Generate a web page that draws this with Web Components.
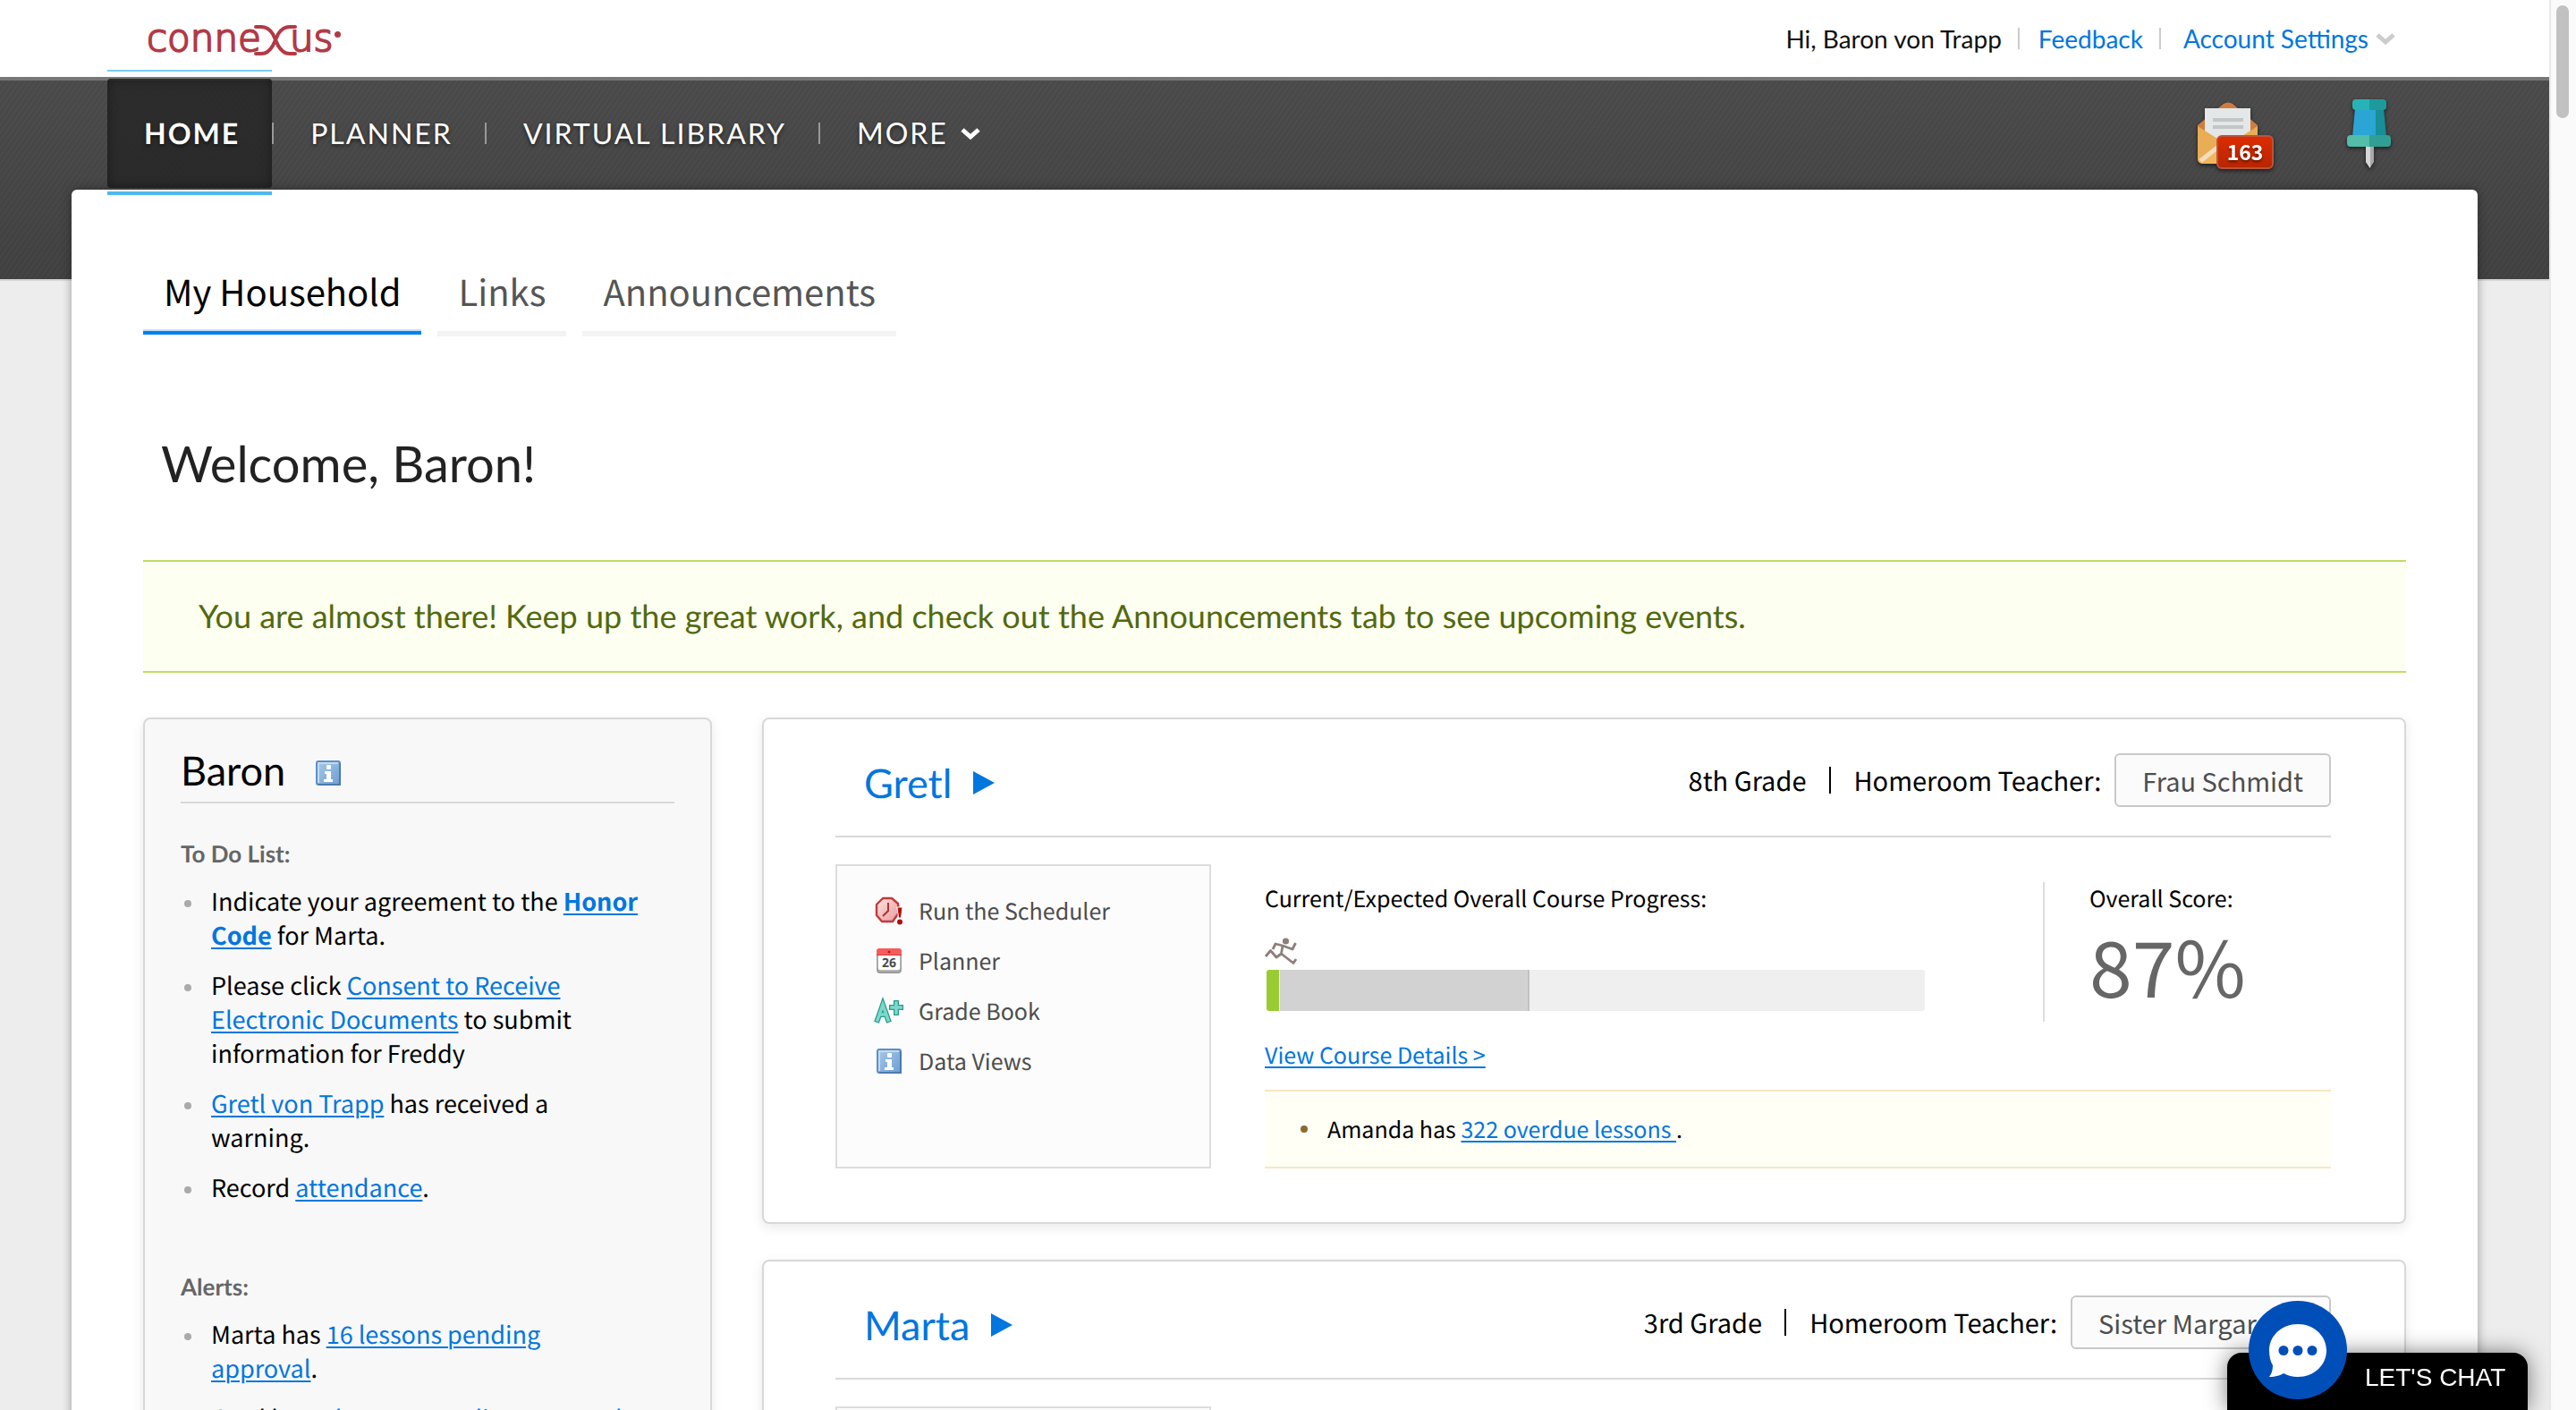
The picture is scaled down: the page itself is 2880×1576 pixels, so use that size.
<!DOCTYPE html>
<html lang="en">
<head>
<meta charset="utf-8">
<title>Connexus – Home</title>
<style>
  html, body { margin: 0; height: 100%; overflow: hidden; }
  body {
    --head: Lato, "Open Sans", sans-serif;
    --body: "Noto Sans CJK SC", "Open Sans", sans-serif;
    --link: #0076df;
    font: 27px/38px var(--body);
    text-rendering: geometricPrecision;
    color: #000;
    background: #ededed;
  }
  a { color: var(--link); text-decoration-thickness: 2px; text-underline-offset: 3px; }
</style>
</head>
<body>
<cx-app>
  <cx-topbar slot="top" user="Baron von Trapp"></cx-topbar>
  <cx-nav slot="nav" count="163"></cx-nav>
  <cx-page>
    <cx-tabs></cx-tabs>
    <cx-welcome>Welcome, Baron!</cx-welcome>
    <cx-banner>You are almost there! Keep up the great work, and check out the Announcements tab to see upcoming events.</cx-banner>
    <cx-columns>
      <cx-panel slot="side" name="Baron">
        <cx-list label="To Do List:">
          <cx-item>Indicate your agreement to the <a href="#honor"><b>Honor Code</b></a> for Marta.</cx-item>
          <cx-item>Please click <a href="#consent">Consent to Receive Electronic Documents</a> to submit information for Freddy</cx-item>
          <cx-item><a href="#gretl">Gretl von Trapp</a> has received a warning.</cx-item>
          <cx-item>Record <a href="#attendance">attendance</a>.</cx-item>
        </cx-list>
        <cx-list label="Alerts:">
          <cx-item>Marta has <a href="#marta-pending">16 lessons pending approval</a>.</cx-item>
          <cx-item>Gretl has <a href="#gretl-pending">3 lessons pending approval</a>.</cx-item>
        </cx-list>
      </cx-panel>
      <cx-student name="Gretl" grade="8th Grade" teacher="Frau Schmidt" score="87%">Amanda has <a href="#overdue">322 overdue lessons </a>.</cx-student>
      <cx-student name="Marta" grade="3rd Grade" teacher="Sister Margaretta" score="91%">Marta has <a href="#overdue">12 overdue lessons </a>.</cx-student>
    </cx-columns>
  </cx-page>
  <cx-chat slot="chat"></cx-chat>
</cx-app>

<script>
const define = (tag, render) => customElements.define(tag, class extends HTMLElement {
  constructor() {
    super();
    this.attachShadow({ mode: 'open' }).innerHTML =
      '<style>:host{display:block;box-sizing:border-box}*{box-sizing:border-box}</style>' +
      render(n => this.getAttribute(n) || '');
  }
});

const ICONS = {
  info: [28, 28, `
    <defs><linearGradient id="g" x1="0" y1="0" x2="1" y2="1"><stop offset="0" stop-color="#a9c8e8"/><stop offset="1" stop-color="#6d9fd4"/></linearGradient></defs>
    <rect x="1" y="1" width="26" height="26" rx="2" fill="url(#g)" stroke="#5c8fc6" stroke-width="2"/>
    <path d="M3 25V3H25" fill="none" stroke="#c3daf0" stroke-width="2"/>
    <path d="M3 27H27V3" fill="none" stroke="#4a7ab0" stroke-width="2"/>
    <rect x="12" y="5" width="5" height="5" rx="1" fill="#fff"/>
    <path d="M10 12h7v9h2v3H9v-3h3v-6h-2z" fill="#fff"/>`],
  clock: [32, 32, `
    <defs><linearGradient id="g" x1="0" y1="0" x2="1" y2="1"><stop offset="0" stop-color="#fbe4e4"/><stop offset="1" stop-color="#e89a9a"/></linearGradient></defs>
    <path d="M9 2h10l7 6 1 10-7 10H8L2 21V9z" fill="url(#g)" stroke="#c33a3a" stroke-width="2.4" stroke-linejoin="round"/>
    <path d="M15 7v9l-6 6" fill="none" stroke="#b83030" stroke-width="2"/>
    <path d="M25 12h6l-1.500 12h-3z" fill="#b50d0d" stroke="#fff" stroke-width="1"/>
    <circle cx="28" cy="28.500" r="3" fill="#b50d0d"/>`],
  calendar: [28, 28, `
    <rect x="1" y="3" width="26" height="24" rx="3" fill="#e8e8e8" stroke="#9a9a9a" stroke-width="2"/>
    <rect x="1" y="1" width="26" height="24" rx="3" fill="#fff" stroke="#a0a0a0" stroke-width="1.500"/>
    <path d="M0 8V3a3 3 0 0 1 3-3h22a3 3 0 0 1 3 3v5z" fill="#f75c5c"/><path d="M0 7.500h28" stroke="#d93a3a"/>
    <circle cx="14" cy="4" r="1.500" fill="#a22"/>
    <text x="14" y="21" text-anchor="middle" font-family="Open Sans, sans-serif" font-weight="700" font-size="14" fill="#4a4a4a">26</text>`],
  grade: [32, 26, `
    <g fill="none" stroke-linecap="square"><g stroke="#2a9a8c" stroke-width="6"><path d="M3 23L9 6L15 23M6 17h6"/><path d="M24 4v11M19 9h10"/></g>
    <g stroke="#7dd9cc" stroke-width="3.500"><path d="M3 23L9 6L15 23M6 17h6"/><path d="M24 4v11M19 9h10"/></g></g>`],
  runner: [36, 30, `
    <circle cx="23.500" cy="4" r="3.600" fill="#8e7f7b"/>
    <path d="M9 13L12 7L20 9L31 13L34.500 6M20 9L18.500 18L13 22L6.500 14.500L1 21M18.500 18L32 28.500L35 24" fill="none" stroke="#8e7f7b" stroke-width="2.800" stroke-linejoin="round"/>`],
  play: [24, 26, `<path d="M0 0L24 13L0 26z" fill="currentColor"/>`],
  chevron: [22, 14, `<path d="M2 3L11 11L20 3" fill="none" stroke="currentColor" stroke-width="5"/>`],
  mail: [70, 72, `
    <path d="M1 26L30 2Q35-1 40 2L68 26V40H1z" fill="#cf7d3f"/>
    <path d="M9 7H60V54H9z" fill="#e3e7e8"/>
    <path d="M18 18H52v4H18zM18 26H52v4H18z" fill="#c2c6c6"/>
    <path d="M1 27L31 46H38L68 27V64a5 5 0 0 1-5 5H6a5 5 0 0 1-5-5z" fill="#e9ad55"/>
    <path d="M5 67L29 47Q35 44 40 47L64 67Q62 69 60 69H9z" fill="#f3b55c"/>
    <path d="M4 66L28 47" stroke="#f5dcc0" stroke-width="5"/>`],
  pin: [50, 78, `
    <path d="M21 50H30V70L25.500 77L21 70z" fill="#a9a9a9"/><path d="M21 50H26V77L21 70z" fill="#d6d6d6"/>
    <path d="M9 10H32V42H6z" fill="#2ba5d4"/><path d="M32 10H41L44 42H32z" fill="#178e98"/>
    <path d="M6 4a4 4 0 0 1 4-4H25V12H10a4 4 0 0 1-4-4z" fill="#27b3b5"/><path d="M25 0H40a4 4 0 0 1 4 4V8a4 4 0 0 1-4 4H25z" fill="#1c9a9c"/>
    <path d="M0 44a4 4 0 0 1 4-4H25V53H4a4 4 0 0 1-4-4z" fill="#52bda8"/><path d="M25 40H45a4 4 0 0 1 4 4v5a4 4 0 0 1-4 4H25z" fill="#2f9f95"/>`],
  bubble: [110, 110, `
    <circle cx="55" cy="55" r="55" fill="#004fb8"/>
    <path d="M55 26c18 0 32 13 32 29.500S73 85 55 85c-6 0-11-1.500-16-4-3 2-9 4-16 4 3-4 4-8 4-13-2.500-4-4-10-4-16.500C23 39 37 26 55 26z" fill="#fff"/>
    <g fill="#004fb8"><circle cx="39" cy="55.500" r="5.500"/><circle cx="55" cy="55.500" r="5.500"/><circle cx="71" cy="55.500" r="5.500"/></g>`]
};

define('cx-icon', at => {
  const [w, h, art] = ICONS[at('name')];
  return `<style>:host{flex:none;line-height:0}svg{display:block;overflow:visible}</style>
    <svg width="${w}" height="${h}" viewBox="0 0 ${w} ${h}" aria-hidden="true">${art}</svg>`;
});

define('cx-scrollbar', () => `<style>
  :host{flex:none;width:30px;padding:6px 6px 0;background:#fafafa;border-left:2px solid #e8e8e8}
  div{width:14px;height:126px;border-radius:7px;background:#c1c1c1}
  </style><div></div>`);

define('cx-app', () => `<style>
  :host{display:flex;height:100vh;overflow:hidden}
  .view{flex:1;min-width:0;height:100%;overflow:hidden;display:flex;flex-direction:column;
    background:
      linear-gradient(#777 0 4px,transparent 4px 226px) 0 86px/100% 226px no-repeat,
      repeating-linear-gradient(125deg,rgba(255,255,255,.025) 0 2px,transparent 2px 5px) 0 86px/100% 226px no-repeat,
      linear-gradient(#4a4a4a,#404040) 0 86px/100% 226px no-repeat,
      linear-gradient(#d6d6d6,#d6d6d6) 0 312px/100% 2px no-repeat,
      #ededed}
  </style>
  <div class="view"><slot name="top"></slot><slot name="nav"></slot><slot></slot></div>
  <cx-scrollbar></cx-scrollbar><slot name="chat"></slot>`);

define('cx-logo', () => `<style>
  :host{display:flex;align-items:center;color:#b23a45;font:200 42px/48px "DejaVu Sans",sans-serif;-webkit-text-stroke:2px #b23a45}
  svg{display:block;margin:4px -8px 0}
  i{width:7px;height:7px;border-radius:4px;background:#b23a45;align-self:flex-start;margin:16px 0 0 2px}
  </style><span>conne</span>
  <svg width="48" height="36" viewBox="0 0 48 36" role="img" aria-label="X"><path d="M2 3H8Q16 3 21 11L27 24Q32 33 40 33H46M46 3H40Q32 3 27 11L21 24Q16 33 8 33H2" fill="none" stroke="#b23a45" stroke-width="4" stroke-linecap="round"/></svg>
  <span>us</span><i></i>`);

define('cx-topbar', at => `<style>
  :host{display:flex;flex:none;justify-content:space-between;align-items:center;height:86px;padding:0 172px 0 164px;background:#fff;font:28px/34px var(--head)}
  div{display:flex;align-items:center}
  span{color:#111}
  hr{width:2px;height:24px;margin:0 21px 0 18px;border:0;background:#ccc}
  a,button{font:inherit;color:var(--link);text-decoration:none;background:none;border:0;padding:0}
  button{display:flex;align-items:center;gap:8px;padding-left:4px}
  cx-icon{color:#ccc}
  </style>
  <cx-logo></cx-logo>
  <div><span>Hi, ${at('user')}</span><hr><a href="#feedback">Feedback</a><hr><button>Account Settings<cx-icon name="chevron"></cx-icon></button></div>`);

define('cx-nav', at => `<style>
  :host{display:flex;flex:none;justify-content:space-between;position:relative;z-index:1;height:126px;padding:2px 176px 2px 120px;color:#fff}
  nav,.tools{display:flex;align-items:center}
  nav a,nav button{display:flex;align-items:center;gap:14px;height:100%;padding:0 36px 0 41px;font:32px/40px var(--head);letter-spacing:2px;color:#fff;background:none;border:0;text-decoration:none;text-shadow:0 2px 4px rgba(0,0,0,.6)}
  nav .home{position:relative;font-weight:700;border-radius:4px;background:rgba(34,34,34,.75);box-shadow:inset 0 0 12px rgba(0,0,0,.4)}
  .home::before,.home::after{content:"";position:absolute;left:0;right:0}
  .home::before{top:-10px;height:2px;background:#7ccbf3}
  .home::after{bottom:-8px;height:4px;background:#4fb8ee}
  hr{width:2px;height:24px;margin:0;border:0;background:#999}
  .tools{gap:82px;padding-top:2px}
  .tools button{display:block;position:relative;padding:0;border:0;background:none;filter:drop-shadow(0 2px 2px rgba(0,0,0,.6))}
  .tools .mail{padding-right:16px}
  .mail b{position:absolute;right:0;bottom:-3px;width:64px;height:38px;border:2px solid #b9543c;border-radius:6px;background:linear-gradient(#dd2c00,#b82600);color:#fff;font:700 23px/32px var(--body);text-align:center;text-shadow:0 2px 3px rgba(0,0,0,.5)}
  </style>
  <nav><a class="home" href="#home">HOME</a><hr><a href="#planner">PLANNER</a><hr><a href="#library">VIRTUAL LIBRARY</a><hr><button>MORE<cx-icon name="chevron"></cx-icon></button></nav>
  <div class="tools"><button class="mail" aria-label="Mail"><cx-icon name="mail"></cx-icon><b>${at('count')}</b></button><button aria-label="Pinned"><cx-icon name="pin"></cx-icon></button></div>`);

define('cx-page', () => `<style>
  :host{flex:none;margin:0 80px;padding:83px 80px 80px;background:#fff;border-radius:6px 6px 0 0;box-shadow:0 0 12px rgba(0,0,0,.35)}
  </style><slot></slot>`);

define('cx-tabs', () => `<style>
  :host{display:flex;align-items:flex-start;gap:18px;font-size:40px;line-height:60px}
  a{padding:0 23px 15px;border-bottom:6px solid #f3f3f3;color:#555;text-decoration:none}
  a.on{border-bottom:4px solid #0080ee;color:#000;box-shadow:inset 0 -2px #c5def5}
  </style><a class="on" href="#household">My Household</a><a href="#links">Links</a><a href="#announcements">Announcements</a>`);

define('cx-welcome', () => `<style>
  h1{margin:108px 0 74px;padding-left:20px;font:56px/68px var(--head);color:#222}
  </style><h1><slot></slot></h1>`);

define('cx-banner', () => `<style>
  :host{padding:37px 62px 39px;border:solid #bfdd62;border-width:2px 0;background:#fdfff0;color:#52690f;font:36px/46px var(--head)}
  </style><slot></slot>`);

define('cx-columns', () => `<style>
  :host{display:flex;gap:56px;margin-top:50px}
  aside{flex:0 0 636px;display:flex}
  section{flex:1;min-width:0;display:flex;flex-direction:column;gap:40px}
  </style><aside><slot name="side"></slot></aside><section><slot></slot></section>`);

define('cx-panel', at => `<style>
  :host{flex:1;padding:31px 40px;border:2px solid #d8d8d8;border-radius:8px;background:#f8f8f8;box-shadow:0 4px 14px rgba(0,0,0,.09)}
  h2{display:flex;align-items:baseline;gap:34px;margin:0;padding-bottom:9px;border-bottom:2px solid #d8d8d8;font:45px/52px var(--head)}
  .lists{display:flex;flex-direction:column;gap:74px;margin-top:38px}
  </style><h2>${at('name')}<cx-icon name="info"></cx-icon></h2><div class="lists"><slot></slot></div>`);

define('cx-list', at => `<style>
  h3{margin:0 0 16px;font:700 26px/36px var(--head);color:#666}
  div{display:flex;flex-direction:column;gap:18px}
  </style><h3>${at('label')}</h3><div role="list"><slot></slot></div>`);

define('cx-item', () => `<style>
  :host{display:flex;gap:22px;padding:0 40px 0 4px}
  i{flex:none;width:8px;height:8px;margin-top:18px;border-radius:4px;background:#aaa}
  </style><i></i><div role="listitem"><slot></slot></div>`);

define('cx-student', at => `<style>
  :host{padding:38px 82px 60px 80px;border:2px solid #d8d8d8;border-radius:8px;background:#fff;box-shadow:0 4px 14px rgba(0,0,0,.09)}
  header{display:flex;justify-content:space-between;align-items:flex-end;padding:0 0 32px 32px;border-bottom:2px solid #d8d8d8}
  h2{margin:0;font:45px/54px var(--head)}
  h2 a{display:flex;align-items:center;gap:24px;color:var(--link);text-decoration:none}
  .meta{display:flex;align-items:center;height:60px;font-size:29px;line-height:40px}
  .meta hr{width:2px;height:30px;margin:0 26px 0 25px;border:0;background:#000}
  .meta button{height:60px;margin-left:15px;padding:0 29px;border:2px solid #c8c8c8;border-radius:6px;background:#fbfbfb;color:#4d4d4d;font:inherit}
  .body{display:flex;gap:60px;margin-top:30px;font-size:25px;line-height:36px}
  nav{flex:0 0 420px;padding:22px 42px 90px;border:2px solid #ddd;background:#fcfcfc}
  nav a{display:flex;align-items:center;gap:17px;height:56px;color:#4d4d4d;text-decoration:none}
  nav span{flex:none;width:32px;display:flex;justify-content:center}
  .main{flex:1;min-width:0;display:flex;flex-direction:column;justify-content:space-between;padding-top:20px}
  .stats{display:flex;align-items:flex-start}
  .progress{flex:1}
  .progress cx-icon{margin:26px 0 6px}
  .bar{display:flex;width:calc(85% - 4px);height:46px;margin:0 0 31px 2px;border-radius:3px;overflow:hidden;background:#efefef}
  .bar i{width:2%;background:#99cc33;border-right:1px solid #eee}
  .bar b{width:38%;background:#d2d2d2;border-right:2px solid #c2c2c2}
  .link{color:var(--link);text-decoration-thickness:2px;text-underline-offset:3px}
  .score{width:322px;height:156px;padding-left:50px;border-left:2px solid #ddd}
  .score p{margin:0}
  .score strong{display:block;margin-top:6px;font-size:86px;line-height:100px;font-weight:400;color:#666}
  .alert{display:flex;align-items:center;gap:22px;height:88px;padding-left:40px;border:solid #f5e6c4;border-width:2px 0;background:#fffff6}
  .alert i{width:8px;height:8px;border-radius:4px;background:#8d6a2f}
  </style>
  <header><h2><a href="#student">${at('name')}<cx-icon name="play"></cx-icon></a></h2>
    <div class="meta">${at('grade')}<hr>Homeroom Teacher:<button>${at('teacher')}</button></div></header>
  <div class="body">
    <nav>
      <a href="#scheduler"><span><cx-icon name="clock"></cx-icon></span>Run the Scheduler</a>
      <a href="#planner"><span><cx-icon name="calendar"></cx-icon></span>Planner</a>
      <a href="#grades"><span><cx-icon name="grade"></cx-icon></span>Grade Book</a>
      <a href="#data"><span><cx-icon name="info"></cx-icon></span>Data Views</a>
    </nav>
    <div class="main">
      <div class="stats">
        <div class="progress">Current/Expected Overall Course Progress:
          <cx-icon name="runner"></cx-icon>
          <div class="bar" role="img" aria-label="Course progress"><i></i><b></b></div>
          <a class="link" href="#details">View Course Details &gt;</a></div>
        <div class="score"><p>Overall Score:</p><strong>${at('score')}</strong></div>
      </div>
      <div class="alert"><i></i><div><slot></slot></div></div>
    </div>
  </div>`);

define('cx-chat', () => `<style>
  :host{position:fixed;right:54px;bottom:0;z-index:5}
  button{display:flex;align-items:flex-start;width:336px;height:64px;padding:0 24px;border:0;border-radius:16px 16px 0 0;background:#000;color:#fff;font:28px/56px "Liberation Sans",Arial,sans-serif;box-shadow:0 0 24px rgba(0,0,0,.5)}
  cx-icon{margin:-58px 20px 0 0}
  </style><button><cx-icon name="bubble"></cx-icon>LET'S CHAT</button>`);
</script>
</body>
</html>
